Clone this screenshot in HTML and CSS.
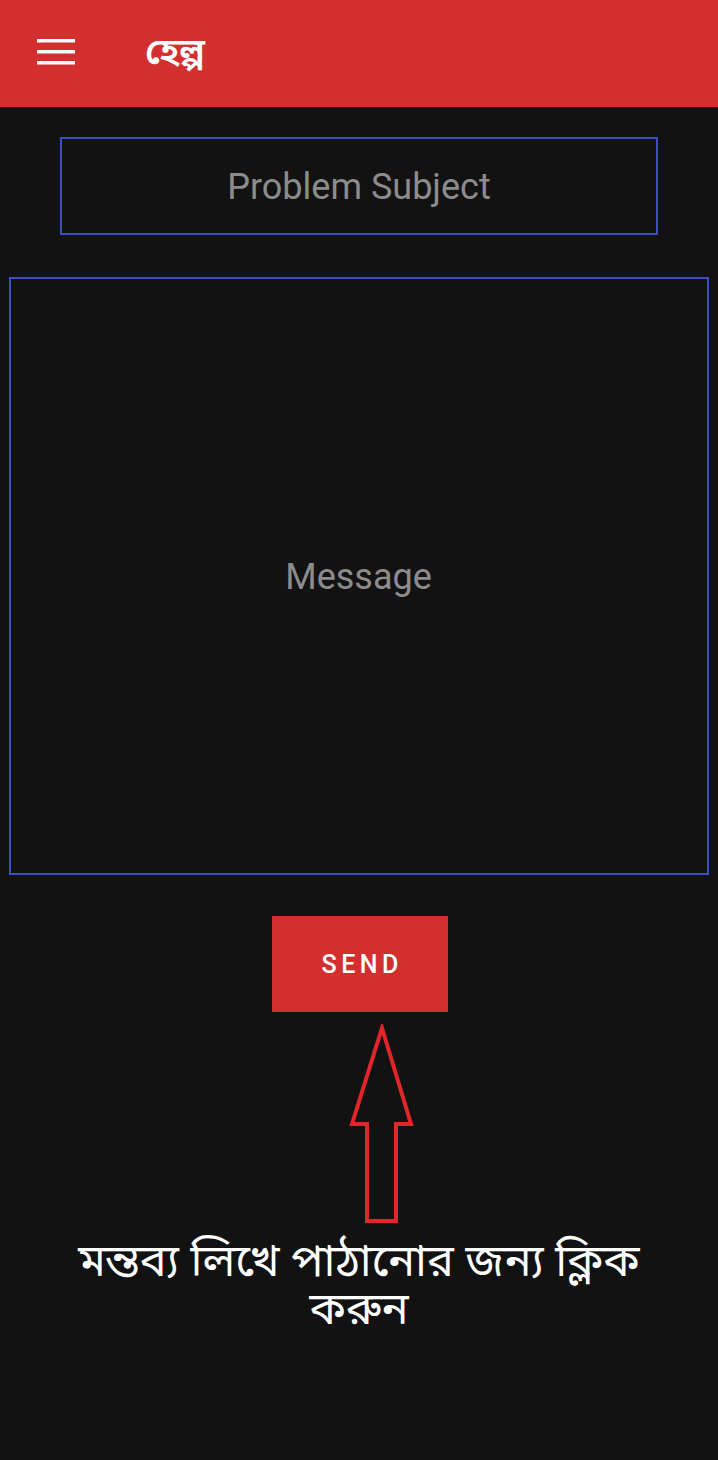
FILE: index.html
```html
<!DOCTYPE html>
<html lang="bn">
<head>
<meta charset="utf-8">
<title>হেল্প</title>
<link rel="stylesheet" href="styles.css">
</head>
<body>
<header class="appbar">
  <svg class="menu" width="38" height="26" viewBox="0 0 38 26">
    <rect x="0" y="0" width="38" height="3.5" fill="#fff"/>
    <rect x="0" y="11" width="38" height="3.5" fill="#fff"/>
    <rect x="0" y="22" width="38" height="3.5" fill="#fff"/>
  </svg>
  <h1 class="title">হেল্প</h1>
</header>
<main class="content">
  <div class="subject">Problem Subject</div>
  <div class="message">Message</div>
  <div class="send">SEND</div>
  <svg class="arrow" width="66" height="202" viewBox="0 0 66 202">
    <polygon points="33,4 62,100 47,100 47,197 18,197 18,100 3,100" fill="none" stroke="#e0252b" stroke-width="4" stroke-linejoin="miter"/>
  </svg>
  <p class="hint">মন্তব্য লিখে পাঠানোর জন্য ক্লিক করুন</p>
</main>
</body>
</html>
```
FILE: styles.css
```css
html, body {
  margin: 0;
  padding: 0;
  background: #121212;
}
body {
  width: 718px;
  height: 1460px;
  font-family: Roboto, "Noto Sans", sans-serif;
}
.appbar {
  height: 107px;
  background: #d32f2f;
  display: flex;
  align-items: center;
  padding-left: 37px;
  box-sizing: border-box;
}
.menu {
  display: block;
  margin-top: -4px;
}
.title {
  margin: 0 0 0 70px;
  color: #fff;
  font-size: 37px;
  font-weight: 600;
  font-family: "Noto Sans Bengali", "Lohit Bengali", "FreeSans", "Noto Sans", sans-serif;
  margin-top: 2px;
}
.content {
  display: flex;
  flex-direction: column;
  align-items: center;
}
.subject {
  margin-top: 30px;
  width: 598px;
  height: 98px;
  box-sizing: border-box;
  border: 2px solid #3b4fc0;
  display: flex;
  align-items: center;
  justify-content: center;
  color: #8c8c8c;
  font-size: 36px;
  padding-top: 2px;
}
.message {
  margin-top: 42px;
  width: 700px;
  height: 598px;
  box-sizing: border-box;
  border: 2px solid #3b4fc0;
  display: flex;
  align-items: center;
  justify-content: center;
  color: #8c8c8c;
  font-size: 36px;
  margin-left: -1px;
  padding-top: 2px;
}
.send {
  margin-top: 41px;
  width: 176px;
  height: 96px;
  background: #d32f2f;
  color: #fff;
  font-size: 25px;
  font-weight: 500;
  letter-spacing: 4.5px;
  text-indent: 4.5px;
  display: flex;
  align-items: center;
  justify-content: center;
  margin-left: 2px;
}
.arrow {
  display: block;
  margin-top: 12px;
  margin-left: 46px;
}
.hint {
  margin: 15px 0 0;
  width: 580px;
  text-align: center;
  color: #fff;
  font-size: 45px;
  line-height: 48px;
  font-family: "Noto Sans Bengali", "Lohit Bengali", "FreeSans", "Noto Sans", sans-serif;
}
```
